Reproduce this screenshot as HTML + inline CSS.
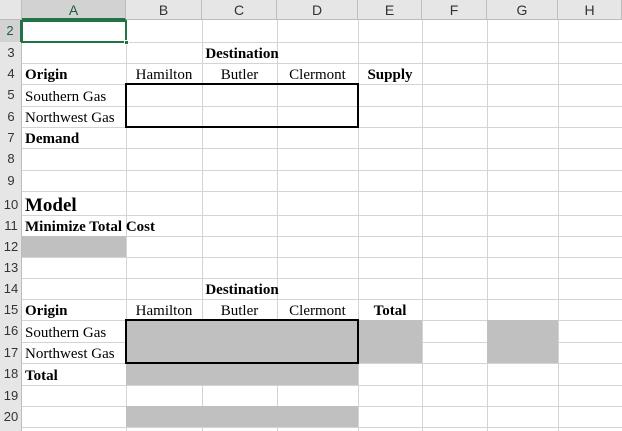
<!DOCTYPE html><html><head><style>
body{margin:0;width:622px;height:431px;overflow:hidden;background:#fff;position:relative;font-family:"Liberation Serif",serif;font-size:15px;color:#000}
div{position:absolute;box-sizing:border-box}
.v{width:1px;background:#d4d4d4;top:20px;height:411px}
.h{height:1px;background:#d4d4d4;left:0;width:622px}
.ch{top:0;height:20px;background:#e6e6e6;border-right:1px solid #bdbdbd;border-bottom:1px solid #bdbdbd;font-family:"Liberation Sans",sans-serif;font-size:14px;color:#333;text-align:center;line-height:20px}
.rh{left:0;width:22px;background:#e6e6e6;border-right:1px solid #bdbdbd;font-family:"Liberation Sans",sans-serif;font-size:13px;color:#333;text-align:center}
.g{background:#c0c0c0}
.t{white-space:nowrap;line-height:21px;margin-top:2px}
.b{font-weight:bold}
</style></head><body>
<div class="ch" style="left:0;width:22px"></div>
<div class="ch" style="left:22px;width:104px;background:#d2d2d2;border-bottom:2px solid #217346;color:#1e5e37">A</div>
<div class="ch" style="left:126px;width:76px">B</div>
<div class="ch" style="left:202px;width:75px">C</div>
<div class="ch" style="left:277px;width:81px">D</div>
<div class="ch" style="left:358px;width:64px">E</div>
<div class="ch" style="left:422px;width:65px">F</div>
<div class="ch" style="left:487px;width:71px">G</div>
<div class="ch" style="left:558px;width:64px">H</div>
<!-- grid -->
<div class="v" style="left:126px"></div><div class="v" style="left:202px"></div><div class="v" style="left:277px"></div><div class="v" style="left:358px"></div><div class="v" style="left:422px"></div><div class="v" style="left:487px"></div><div class="v" style="left:558px"></div>
<div class="h" style="top:42px"></div><div class="h" style="top:63px"></div><div class="h" style="top:84px"></div><div class="h" style="top:106px"></div><div class="h" style="top:127px"></div><div class="h" style="top:148px"></div><div class="h" style="top:170px"></div><div class="h" style="top:191px"></div><div class="h" style="top:215px"></div><div class="h" style="top:236px"></div><div class="h" style="top:257px"></div><div class="h" style="top:278px"></div><div class="h" style="top:299px"></div><div class="h" style="top:320px"></div><div class="h" style="top:342px"></div><div class="h" style="top:363px"></div><div class="h" style="top:385px"></div><div class="h" style="top:406px"></div><div class="h" style="top:427px"></div>
<!-- fills -->
<div class="g" style="left:22px;top:236px;width:104px;height:21px"></div>
<div class="g" style="left:126px;top:320px;width:232px;height:65px"></div>
<div class="g" style="left:358px;top:320px;width:64px;height:43px"></div>
<div class="g" style="left:487px;top:320px;width:71px;height:43px"></div>
<div class="g" style="left:126px;top:406px;width:232px;height:21px"></div>
<!-- row headers -->
<div class="rh" style="top:20px;height:411px"></div>
<div class="rh" style="top:20px;height:22px;line-height:22px;background:#d2d2d2;border-right:2px solid #217346;color:#1e5e37">2</div>
<div class="rh" style="top:42px;height:21px;line-height:21px;background:transparent;border:0">3</div>
<div class="rh" style="top:63px;height:21px;line-height:21px;background:transparent;border:0">4</div>
<div class="rh" style="top:84px;height:22px;line-height:22px;background:transparent;border:0">5</div>
<div class="rh" style="top:106px;height:21px;line-height:21px;background:transparent;border:0">6</div>
<div class="rh" style="top:127px;height:21px;line-height:21px;background:transparent;border:0">7</div>
<div class="rh" style="top:148px;height:22px;line-height:22px;background:transparent;border:0">8</div>
<div class="rh" style="top:170px;height:21px;line-height:21px;background:transparent;border:0">9</div>
<div class="rh" style="top:191px;height:24px;line-height:28px;background:transparent;border:0">10</div>
<div class="rh" style="top:215px;height:21px;line-height:21px;background:transparent;border:0">11</div>
<div class="rh" style="top:236px;height:21px;line-height:21px;background:transparent;border:0">12</div>
<div class="rh" style="top:257px;height:21px;line-height:21px;background:transparent;border:0">13</div>
<div class="rh" style="top:278px;height:21px;line-height:21px;background:transparent;border:0">14</div>
<div class="rh" style="top:299px;height:21px;line-height:21px;background:transparent;border:0">15</div>
<div class="rh" style="top:320px;height:22px;line-height:22px;background:transparent;border:0">16</div>
<div class="rh" style="top:342px;height:21px;line-height:21px;background:transparent;border:0">17</div>
<div class="rh" style="top:363px;height:22px;line-height:22px;background:transparent;border:0">18</div>
<div class="rh" style="top:385px;height:21px;line-height:21px;background:transparent;border:0">19</div>
<div class="rh" style="top:406px;height:21px;line-height:21px;background:transparent;border:0">20</div>
<div style="left:21px;top:20px;width:1px;height:411px;background:#bdbdbd"></div>
<!-- borders -->
<div style="left:21px;top:20px;width:106px;height:23px;border:2px solid #217346"></div>
<div style="left:124px;top:40px;width:5px;height:5px;background:#217346;border:1px solid #fff"></div>
<div style="left:125px;top:83px;width:234px;height:45px;border:2px solid #000"></div>
<div style="left:125px;top:319px;width:234px;height:45px;border:2px solid #000"></div>
<!-- text -->
<div class="t b" style="left:126px;width:232px;top:42px;text-align:center">Destination</div>
<div class="t b" style="left:25px;top:63px">Origin</div>
<div class="t" style="left:126px;width:76px;top:63px;text-align:center">Hamilton</div>
<div class="t" style="left:202px;width:75px;top:63px;text-align:center">Butler</div>
<div class="t" style="left:277px;width:81px;top:63px;text-align:center">Clermont</div>
<div class="t b" style="left:358px;width:64px;top:63px;text-align:center">Supply</div>
<div class="t" style="left:25px;top:85px">Southern Gas</div>
<div class="t" style="left:25px;top:106px">Northwest Gas</div>
<div class="t b" style="left:25px;top:127px">Demand</div>
<div class="t b" style="left:25px;top:191px;font-size:19px;line-height:26px">Model</div>
<div class="t b" style="left:25px;top:215px">Minimize Total Cost</div>
<div class="t b" style="left:126px;width:232px;top:278px;text-align:center">Destination</div>
<div class="t b" style="left:25px;top:299px">Origin</div>
<div class="t" style="left:126px;width:76px;top:299px;text-align:center">Hamilton</div>
<div class="t" style="left:202px;width:75px;top:299px;text-align:center">Butler</div>
<div class="t" style="left:277px;width:81px;top:299px;text-align:center">Clermont</div>
<div class="t b" style="left:358px;width:64px;top:299px;text-align:center">Total</div>
<div class="t" style="left:25px;top:321px">Southern Gas</div>
<div class="t" style="left:25px;top:342px">Northwest Gas</div>
<div class="t b" style="left:25px;top:364px">Total</div>
</body></html>
